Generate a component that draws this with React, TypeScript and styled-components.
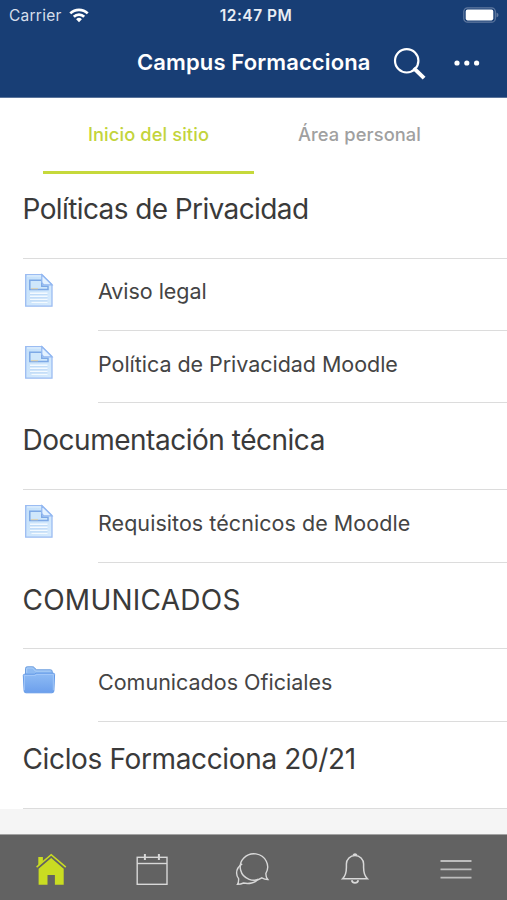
import React from 'react';
import styled, { createGlobalStyle } from 'styled-components';

const GlobalStyle = createGlobalStyle`
  * { box-sizing: border-box; }
  body {
    margin: 0;
    background: #fff;
    font-family: Inter, Roboto, sans-serif;
    color: #3a3a3a;
  }
  h1, h2, p { margin: 0; }
  button { border: 0; padding: 0; background: none; font: inherit; color: inherit; }
  svg { display: block; }
`;

const Screen = styled.div`
  display: flex;
  flex-direction: column;
  width: 507px;
  height: 900px;
  overflow: hidden;
  background: #f5f5f5;
`;

const Header = styled.header`
  flex: none;
  height: 98px;
  background: #183e75;
  color: #fff;
  border-bottom: 1px solid #5a749b;
`;

const StatusBar = styled.div`
  display: grid;
  grid-template-columns: 1fr auto 1fr;
  align-items: center;
  height: 30px;
  padding: 0 8px 0 9px;
  font-size: 15.5px;
`;

const Carrier = styled.div`
  display: flex;
  align-items: center;
  gap: 7px;
  color: #d6dfeb;
  letter-spacing: 0.25px;
`;

const Clock = styled.div`
  padding-left: 4px;
  font-weight: 600;
  font-size: 15.5px;
  color: #e8edf4;
  letter-spacing: 0.5px;
`;

const BatterySlot = styled.div`
  display: flex;
  justify-content: flex-end;
`;

const TitleBar = styled.div`
  display: flex;
  align-items: center;
  height: 66px;
  padding-left: 137px;
`;

const Title = styled.h1`
  width: 256px;
  padding-bottom: 2px;
  font-size: 22px;
  line-height: 30px;
  font-weight: 600;
  letter-spacing: 0.12px;
  white-space: nowrap;
`;

const MoreButton = styled.button`
  margin-left: 28px;
`;

const Tabs = styled.nav`
  flex: none;
  display: flex;
  height: 76px;
  padding: 0 43px;
  background: #fff;
`;

const Tab = styled.button<{ $active?: boolean }>`
  flex: none;
  width: 211px;
  padding-bottom: 1px;
  font-size: 18.3px;
  font-weight: 500;
  letter-spacing: 0.1px;
  white-space: nowrap;
  color: ${(p) => (p.$active ? '#c3d43b' : '#a0a0a0')};
  border-bottom: 3px solid ${(p) => (p.$active ? '#c6d93b' : 'transparent')};
`;

const List = styled.main`
  flex: none;
`;

const Heading = styled.h2<{ $spacing: number }>`
  height: 86.9px;
  margin-left: 22.5px;
  padding-top: 20px;
  border-bottom: 1px solid #dcdcdc;
  font-size: 28px;
  line-height: 35px;
  font-weight: 400;
  letter-spacing: ${(p) => p.$spacing}px;
`;

const Section = styled.section`
  background: #fff;

  &:first-child ${Heading} {
    height: 84.9px;
    padding-top: 18.4px;
  }
`;

const Row = styled.div`
  display: flex;
  height: 72.25px;
  padding-left: 22px;
`;

const IconSlot = styled.div`
  flex: none;
  width: 76px;
  padding-top: 14px;
`;

const RowLabel = styled.p<{ $spacing: number }>`
  flex: 1;
  padding-top: 17.5px;
  border-bottom: 1px solid #dcdcdc;
  font-size: 21.5px;
  line-height: 30px;
  color: #444;
  letter-spacing: ${(p) => p.$spacing}px;
`;

const TabBar = styled.footer`
  flex: none;
  display: grid;
  grid-template-columns: repeat(5, 1fr);
  align-items: start;
  height: 66px;
  margin-top: auto;
  background: #626262;
  border-top: 1px solid #a2a2a2;
`;

const BarButton = styled.button`
  display: flex;
  justify-content: center;
  padding-top: 17px;
  color: #d8d8d8;
`;

const WifiIcon = () => (
  <svg width="20" height="15" viewBox="0 0 20 15" fill="none" stroke="#fff" strokeWidth="2.7">
    <path d="M1.3 5.4a12.4 12.4 0 0 1 17.4 0" />
    <path d="M4.8 8.8a7.4 7.4 0 0 1 10.4 0" />
    <path d="M10 14.2l-2.9-2.9a4.1 4.1 0 0 1 5.8 0z" fill="#fff" stroke="none" />
  </svg>
);

const BatteryIcon = () => (
  <svg width="36" height="16" viewBox="0 0 36 16">
    <rect x="0.8" y="0.8" width="31.5" height="14.4" rx="3.8" fill="none" stroke="#6079a0" strokeWidth="1.2" />
    <rect x="2.7" y="2.6" width="27.6" height="10.8" rx="1.8" fill="#fff" />
    <path d="M33.5 5.5q2 .6 2 2.5t-2 2.5z" fill="#6079a0" />
  </svg>
);

const SearchIcon = () => (
  <svg width="33" height="33" viewBox="0 0 33 33" fill="none" stroke="#fff">
    <circle cx="13.7" cy="13.8" r="11.7" strokeWidth="2.2" />
    <path d="M22.3 22.6l8.8 8.5" strokeWidth="4" />
    <path d="M20.6 21l3 3" strokeWidth="2.6" />
  </svg>
);

const MoreIcon = () => (
  <svg width="26" height="8" viewBox="0 0 26 8" fill="#fff">
    <circle cx="3" cy="4" r="2.6" />
    <circle cx="12.8" cy="4" r="2.6" />
    <circle cx="22.6" cy="4" r="2.6" />
  </svg>
);

const PageIcon = () => (
  <svg width="34" height="36" viewBox="0 0 34 36">
    <defs>
      <linearGradient id="paper" x1="0" y1="0" x2="1" y2="1">
        <stop offset="0" stopColor="#c4e0fa" />
        <stop offset="1" stopColor="#d7ebfd" />
      </linearGradient>
    </defs>
    <path d="M3.7 1.6H20L30 11.4v21.8H3.7z" fill="url(#paper)" stroke="#9bbcf2" strokeWidth="1.3" />
    <path d="M5 2.9h14" stroke="#e7f4ff" />
    <path d="M7.8 7.2h12v6H26v3.4H7.8z" fill="#cfe7fb" stroke="#7da9e6" strokeWidth="1.5" />
    <path d="M9 15.6h7" stroke="#d8d2b9" strokeWidth="1.3" />
    <path d="M19.8 1.8L30 11.9h-8.4l-1.8-2.5z" fill="#e4f2ff" stroke="#91b7f1" strokeWidth="1.2" />
    <path d="M8 20.2h17.5M8 23.3h17.5M8 26.4h17.5M9.5 29.4h16" stroke="#f4faff" strokeWidth="1.4" />
    <path d="M8 21.7h17.5M8 24.8h17.5M8 27.9h17.5" stroke="#b7d4f5" strokeWidth="0.8" />
  </svg>
);

const FolderIcon = () => (
  <svg width="34" height="36" viewBox="0 0 34 36">
    <defs>
      <linearGradient id="folder" x1="0" y1="0" x2="0" y2="1">
        <stop offset="0" stopColor="#8fbcf5" />
        <stop offset="1" stopColor="#6c9fec" />
      </linearGradient>
    </defs>
    <path d="M3.5 12V5.5q0-1.7 1.7-1.7h5.6q1 0 1.7.9l1.8 2.1h14.2q1.8 0 1.8 1.8V12z" fill="#8dbaf2" stroke="#6e9fdf" />
    <path d="M4.7 9.8V6q0-1 .8-1h5.1l2.8 3.1h15.3" fill="none" stroke="#b8d7fa" strokeWidth="0.8" />
    <path d="M1.3 12.4q0-1.2 1.4-1.2h9.7l1.8-1h17q1.4 0 1.4 1.3l-.7 16.3q0 2-2 2H4q-1.9 0-1.9-2z" fill="url(#folder)" stroke="#659be8" />
    <path d="M2.4 27.2V12.4H13l1.8-1h16.5v15.8" fill="none" stroke="#abcdfa" strokeWidth="0.8" />
  </svg>
);

const HomeIcon = () => (
  <svg width="36" height="36" viewBox="0 0 36 36" fill="#c9dc22">
    <path d="M5.3 5.1h4.6v4.5l-4.6 4.3z" />
    <path d="M3.6 15.1L18.2 2.7 32.8 15.1" fill="none" stroke="#c9dc22" strokeWidth="1.6" />
    <path d="M18.2 6.1l12.5 10.6v16.1h-8.8V23h-7.4v9.8H5.6V16.7z" />
  </svg>
);

const CalendarIcon = () => (
  <svg width="36" height="36" viewBox="0 0 36 36" fill="none" stroke="currentColor" strokeWidth="1.4">
    <rect x="3.2" y="5.3" width="29.8" height="27" />
    <path d="M3 11.5h30" />
    <path d="M10.9 2v6M24.9 2v6" strokeWidth="2" />
  </svg>
);

const ChatIcon = () => (
  <svg width="38" height="36" viewBox="0 0 38 36" fill="none" stroke="currentColor" strokeWidth="1.4">
    <path d="M33.8 27.5C32 27.5 29.7 26.9 27.8 25.8A13.7 13.2 0 1 1 31.8 21.6C31.8 23.8 32.5 26 33.8 27.5z" />
    <path d="M8.2 11.8C4.6 14.1 2.6 17.5 2.6 21C2.6 23.2 3.4 25.1 4.6 26.7C4.7 29 4.6 30.9 3.5 32.4C6 32.4 7.8 31.9 9.6 31C14.7 32.2 21 31.1 24.1 27" />
  </svg>
);

const BellIcon = () => (
  <svg width="36" height="36" viewBox="0 0 36 36" fill="none" stroke="currentColor" strokeWidth="1.5">
    <path d="M5.6 26.7C8.2 24.2 9.4 20.2 9.4 15.5V12.1A8.6 8.6 0 0 1 26.6 12.1V15.5C26.6 20.2 27.8 24.2 30.4 26.7z" />
    <path d="M16.5 3.2a1.6 1.6 0 0 1 3 0" strokeWidth="2" />
    <path d="M14.7 28.2a3.4 3.4 0 0 0 6.6 0" strokeWidth="1.8" />
  </svg>
);

const MenuIcon = () => (
  <svg width="36" height="36" viewBox="0 0 36 36" stroke="#bdbdbd" strokeWidth="1.8">
    <path d="M2.5 9h31M2.5 17.3h31M2.5 25.6h31" />
  </svg>
);

type Item = { label: string; spacing: number; kind: 'page' | 'folder' };
type Group = { title: string; spacing: number; items: Item[] };

const groups: Group[] = [
  {
    title: 'Políticas de Privacidad',
    spacing: -0.6,
    items: [
      { label: 'Aviso legal', spacing: -0.05, kind: 'page' },
      { label: 'Política de Privacidad Moodle', spacing: -0.04, kind: 'page' },
    ],
  },
  {
    title: 'Documentación técnica',
    spacing: -0.48,
    items: [{ label: 'Requisitos técnicos de Moodle', spacing: 0.05, kind: 'page' }],
  },
  {
    title: 'COMUNICADOS',
    spacing: 0.25,
    items: [{ label: 'Comunicados Oficiales', spacing: 0, kind: 'folder' }],
  },
  { title: 'Ciclos Formacciona 20/21', spacing: -0.36, items: [] },
];

export default function App() {
  return (
    <Screen>
      <GlobalStyle />
      <Header>
        <StatusBar>
          <Carrier>
            Carrier
            <WifiIcon />
          </Carrier>
          <Clock>12:47 PM</Clock>
          <BatterySlot>
            <BatteryIcon />
          </BatterySlot>
        </StatusBar>
        <TitleBar>
          <Title>Campus Formacciona</Title>
          <button aria-label="Buscar">
            <SearchIcon />
          </button>
          <MoreButton aria-label="Más">
            <MoreIcon />
          </MoreButton>
        </TitleBar>
      </Header>
      <Tabs>
        <Tab $active>Inicio del sitio</Tab>
        <Tab>Área personal</Tab>
      </Tabs>
      <List>
        {groups.map((group) => (
          <Section key={group.title}>
            <Heading $spacing={group.spacing}>{group.title}</Heading>
            {group.items.map((item) => (
              <Row key={item.label}>
                <IconSlot>{item.kind === 'page' ? <PageIcon /> : <FolderIcon />}</IconSlot>
                <RowLabel $spacing={item.spacing}>{item.label}</RowLabel>
              </Row>
            ))}
          </Section>
        ))}
      </List>
      <TabBar>
        <BarButton aria-label="Inicio"><HomeIcon /></BarButton>
        <BarButton aria-label="Calendario"><CalendarIcon /></BarButton>
        <BarButton aria-label="Mensajes"><ChatIcon /></BarButton>
        <BarButton aria-label="Notificaciones"><BellIcon /></BarButton>
        <BarButton aria-label="Menú"><MenuIcon /></BarButton>
      </TabBar>
    </Screen>
  );
}
